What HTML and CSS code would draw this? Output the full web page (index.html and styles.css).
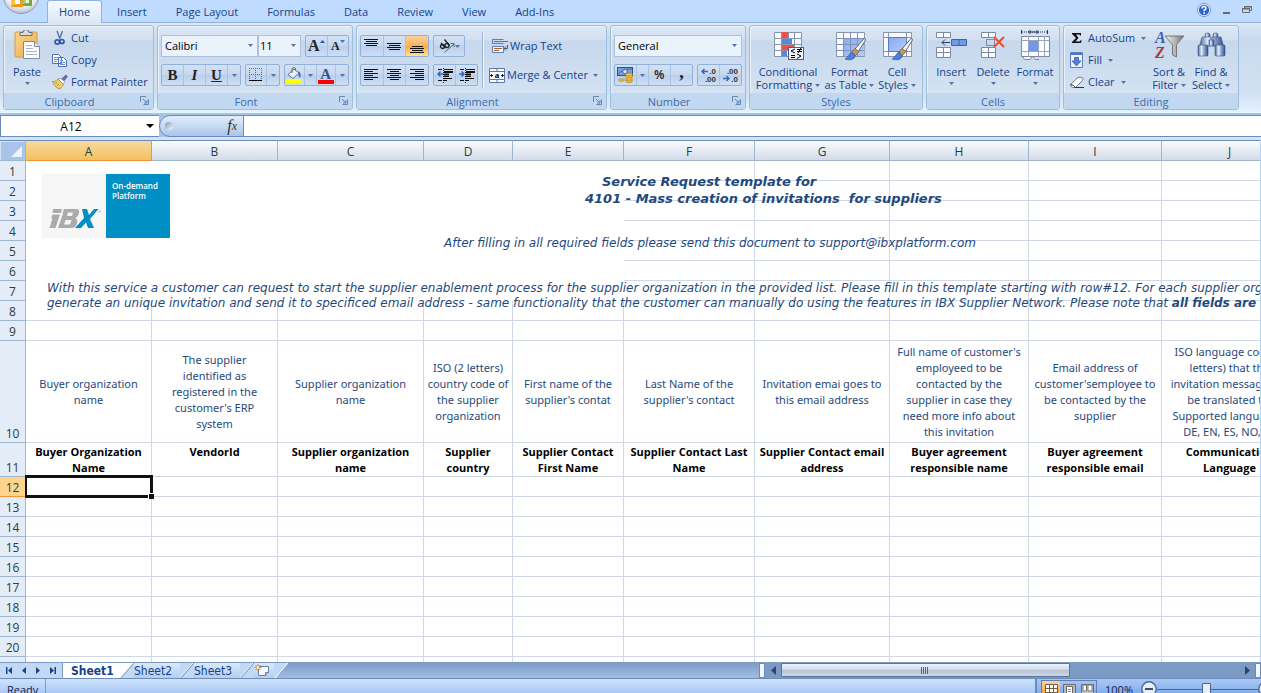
FILE: index.html
```html
<!DOCTYPE html>
<html lang="en">
<head>
<meta charset="utf-8">
<title>Service Request template</title>
<link rel="stylesheet" href="styles.css">
</head>
<body>
<svg class="defs" aria-hidden="true">
  <defs>
    <linearGradient id="gMetal" x1="0" y1="0" x2="1" y2="0"><stop offset="0" stop-color="#f4f4f4"/><stop offset=".5" stop-color="#b9b9b9"/><stop offset="1" stop-color="#6d6d6d"/></linearGradient>
    <linearGradient id="gBino" x1="0" y1="0" x2="1" y2="0"><stop offset="0" stop-color="#48659c"/><stop offset=".35" stop-color="#e4ecfa"/><stop offset=".6" stop-color="#8ea8d8"/><stop offset="1" stop-color="#35507f"/></linearGradient>
    <linearGradient id="gBoard" x1="0" y1="0" x2="1" y2="1"><stop offset="0" stop-color="#fbd58b"/><stop offset="1" stop-color="#e8ad50"/></linearGradient>
    <linearGradient id="gCell" x1="0" y1="0" x2="1" y2="1"><stop offset="0" stop-color="#86a9f0"/><stop offset="1" stop-color="#b5cdfb"/></linearGradient>
    <radialGradient id="gOrb" cx=".5" cy=".35" r=".65"><stop offset="0" stop-color="#fff"/><stop offset=".7" stop-color="#f0f2f5"/><stop offset="1" stop-color="#b9c1ce"/></radialGradient>
    <symbol id="down" viewBox="0 0 5 3"><path d="M0 0h5L2.500 3z" fill="#4f74ad"/></symbol>
    <symbol id="launch" viewBox="0 0 9 9"><path d="M.5 6V.5H6M3.500 8.500h5v-5M3 3l4 4M7 4v3H4" fill="none" stroke="#6685b0"/></symbol>
    <symbol id="brush" viewBox="0 0 22 24"><path d="M20.500 1 11 12l3 3 7.500-12z" fill="#f4f6f8" stroke="#5f6875"/><path d="M11 11.500 8 15l3 4 4-4.500z" fill="#c49a5c" stroke="#6b5136" stroke-width=".7"/><path d="M8 15c-3 1-3 5-7 7 5 2 10 0 10-3z" fill="#4f7fd8" stroke="#34599e" stroke-width=".7"/></symbol>
    <symbol id="tri" viewBox="0 0 4 7"><path d="M4 0v7L0 3.500z"/></symbol>
  </defs>
</svg>

<div class="app">
  <header class="titlebar">
    <button class="orb" aria-label="Office Button">
      <svg width="40" height="16" viewBox="0 0 40 16"><circle cx="21" cy="-4" r="17.500" fill="url(#gOrb)" stroke="#8a9bb8"/><g fill="none" stroke-width="3"><path d="M21.500 0v5.500H13V0" stroke="#f0962a"/><path d="M13.500 0v5" stroke="#f9c338"/><path d="M23 4.500h7.500V0" stroke="#6fb02c"/><path d="M24 4V0" stroke="#9ccf4e"/></g></svg>
    </button>
    <nav class="tabs" aria-label="Ribbon tabs">
      <button class="tab tab-on">Home</button>
      <button class="tab">Insert</button>
      <button class="tab">Page Layout</button>
      <button class="tab">Formulas</button>
      <button class="tab">Data</button>
      <button class="tab">Review</button>
      <button class="tab">View</button>
      <button class="tab">Add-Ins</button>
    </nav>
    <div class="wintools">
      <button aria-label="Help"><svg width="14" height="14" viewBox="0 0 14 14"><circle cx="7" cy="7" r="6.500" fill="#fff" stroke="#6c93cf"/><circle cx="7" cy="7" r="5.200" fill="#2b66cb"/><path d="M5 5.500Q5 3.500 7 3.500T9 5.300Q9 6.300 7.200 7.300V8.200" fill="none" stroke="#fff" stroke-width="1.500"/><rect x="6.400" y="9.300" width="1.600" height="1.600" fill="#fff"/></svg></button>
      <button aria-label="Minimize"><svg width="9" height="14" viewBox="0 0 9 14"><rect x="1" y="9" width="7" height="2" fill="#6b6b6b"/></svg></button>
      <button aria-label="Restore"><svg width="10" height="14" viewBox="0 0 10 14"><path d="M2.500 5V3.500h7v4H8M.5 5.500h7v4h-7z" fill="none" stroke="#6b6b6b"/><path d="M2 3h8v1.500H2zM0 5h8v1.500H0z" fill="#6b6b6b"/></svg></button>
    </div>
  </header>

  <div class="ribbon">
    <section class="group g-clip">
      <div class="body">
        <button class="big"><svg width="32" height="32" viewBox="0 0 32 32"><rect x="4" y="2" width="22" height="25" rx="1" fill="url(#gBoard)" stroke="#d39c45"/><path d="M9 2.500h3q0-3 3-3t3 3h3v3H9z" fill="#d9dbe0" stroke="#6b6e76"/><path d="M12.500 11.500h11l5 5v12h-16z" fill="#fdfdff" stroke="#7c8aa3"/><path d="M23.500 11.500v5h5" fill="#dfe6f3" stroke="#7c8aa3"/><path d="M15 15.500h6M15 18.500h7M15 21.500h11M15 24.500h11" stroke="#a5b2cc"/></svg><span>Paste</span><svg class="dn" width="5" height="3"><use href="#down"/></svg></button>
        <div class="stack">
          <button class="small"><svg width="16" height="16" viewBox="0 0 16 16"><path d="M5 1l3 8M10.500 1l-3 8" stroke="#5e79a8" stroke-width="1.500" fill="none"/><circle cx="5.300" cy="12" r="2.200" fill="none" stroke="#2e5aa8" stroke-width="1.700"/><circle cx="10" cy="11.500" r="2" fill="none" stroke="#2e5aa8" stroke-width="1.700"/></svg>Cut</button>
          <button class="small"><svg width="16" height="16" viewBox="0 0 16 16"><path d="M.5 2.500h6l3 3v6h-9zM6.500 5.500h5l3 3v6h-8z" fill="#fbfcff" stroke="#4870b8"/><path d="M2 5.500h4M2 7.500h4M2 9.500h3M8 8.500h3M8 10.500h5M8 12.500h5" stroke="#6c90d0"/></svg>Copy</button>
          <button class="small"><svg width="16" height="16" viewBox="0 0 16 16"><path d="M14 1l1.500 1.500-4 5L9 5.500z" fill="#6d6aa8" stroke="#4d4a84" stroke-width=".6"/><path d="M9 4.500 6 5l5.500 5.500 1-3z" fill="#fff" stroke="#777" stroke-width=".6"/><path d="M6 5C4 8 2 7 .5 7.500c1 4 4 6.500 7.500 7.500 1-1.500 2-3 3.500-4.500z" fill="#f1cf6a" stroke="#a17d2b" stroke-width=".7"/><path d="M3 9.500l2-1M5 12l2-2" stroke="#b88f38"/></svg>Format Painter</button>
        </div>
      </div>
      <footer><span>Clipboard</span><button class="launch" aria-label="Clipboard options"><svg width="9" height="9"><use href="#launch"/></svg></button></footer>
    </section>

    <section class="group g-font">
      <div class="body rows">
        <div class="row">
          <div class="joined">
            <label class="combo c-font"><select aria-label="Font"><option>Calibri</option></select><svg width="5" height="3"><use href="#down"/></svg></label>
            <label class="combo c-size"><select aria-label="Font size"><option>11</option></select><svg width="5" height="3"><use href="#down"/></svg></label>
          </div>
          <div class="set"><button class="serif grow" aria-label="Grow font">A<svg width="5" height="3" viewBox="0 0 5 3"><path d="M2.500 0 5 3H0z" fill="#2f5597"/></svg></button><button class="serif shrink" aria-label="Shrink font">A<svg width="5" height="3"><use href="#down"/></svg></button></div>
        </div>
        <div class="row">
          <div class="set s-biu"><button class="serif">B</button><button class="serif it">I</button><button class="serif un">U</button><button class="arr" aria-label="Underline options"><svg width="5" height="3"><use href="#down"/></svg></button></div>
          <div class="set s-bord"><button aria-label="Borders"><svg width="14" height="14" viewBox="0 0 14 14"><path d="M.5 0v12M6.500 0v12M12.500 0v12M0 .5h13M0 6.500h13" stroke="#666" stroke-dasharray="1 1" fill="none"/><path d="M0 12.500h13" stroke="#000"/></svg></button><button class="arr" aria-label="Border options"><svg width="5" height="3"><use href="#down"/></svg></button></div>
          <div class="set s-fill"><button aria-label="Fill color"><svg width="16" height="16" viewBox="0 0 16 16"><path d="M2 7.500 8 2l5 4-6 5.500z" fill="#e9eef8" stroke="#5f6f8c"/><path d="M6 6V2.500Q6 .5 8 .5t1.500 3" fill="none" stroke="#666"/><path d="M12 4q4 2 2 7-2-2-1.500-5z" fill="#3765b7"/><rect y="12" width="16" height="4" fill="#ff0"/></svg></button><button class="arr" aria-label="Fill options"><svg width="5" height="3"><use href="#down"/></svg></button><button class="serif fcolor" aria-label="Font color"><span>A</span></button><button class="arr" aria-label="Font color options"><svg width="5" height="3"><use href="#down"/></svg></button></div>
        </div>
      </div>
      <footer><span>Font</span><button class="launch" aria-label="Font options"><svg width="9" height="9"><use href="#launch"/></svg></button></footer>
    </section>

    <section class="group g-align">
      <div class="body split">
        <div class="rows">
          <div class="row">
            <div class="set s-three"><button aria-label="Top align"><svg width="15" height="16" viewBox="0 0 15 16"><path d="M0 1.500h14M2 3.500h11M0 5.500h14M2 7.500h11" stroke="#111"/></svg></button><button aria-label="Middle align"><svg width="15" height="16" viewBox="0 0 15 16"><path d="M0 5.500h14M2 7.500h11M0 9.500h14M2 11.500h11" stroke="#111"/></svg></button><button class="lit" aria-label="Bottom align"><svg width="15" height="16" viewBox="0 0 15 16"><path d="M2 8.500h11M0 10.500h14M2 12.500h11M0 14.500h14" stroke="#111"/></svg></button></div>
            <div class="set s-orient"><button aria-label="Orientation"><svg width="16" height="16" viewBox="0 0 16 16"><g fill="none" stroke="#222" stroke-width="1.300"><circle cx="3.500" cy="8.500" r="2"/><path d="M2 5l4.500 5M5.500 1.500l5 6"/><circle cx="8" cy="7.500" r="2"/></g><path d="M5.500 14.500 15 6M11.500 5.500h3.500V9" fill="none" stroke="#666"/></svg><svg width="5" height="3"><use href="#down"/></svg></button></div>
          </div>
          <div class="row">
            <div class="set s-three"><button aria-label="Align left"><svg width="15" height="12" viewBox="0 0 15 12"><path d="M0 .5h14M0 2.500h9M0 4.500h14M0 6.500h9M0 8.500h14M0 10.500h9" stroke="#111"/></svg></button><button aria-label="Center"><svg width="15" height="12" viewBox="0 0 15 12"><path d="M0 .5h14M3 2.500h9M0 4.500h14M3 6.500h9M0 8.500h14M3 10.500h9" stroke="#111"/></svg></button><button aria-label="Align right"><svg width="15" height="12" viewBox="0 0 15 12"><path d="M0 .5h14M5 2.500h9M0 4.500h14M5 6.500h9M0 8.500h14M5 10.500h9" stroke="#111"/></svg></button></div>
            <div class="set s-two"><button aria-label="Decrease indent"><svg width="16" height="15" viewBox="0 0 16 15"><path d="M1 1.500h4M7 1.500h9M7 12.500h3M1 12.500h4M7 10.500h8M7 8.500h5" stroke="#111"/><path d="M7 4h9M7 6.500h5" stroke="#111" stroke-width="2"/><path d="M6.500 0v15" stroke="#111" stroke-dasharray="1 1"/><path d="M6 6H1M3.500 3.500 1 6l2.500 2.500" stroke="#3566c0" stroke-width="1.500" fill="none"/></svg></button><button aria-label="Increase indent"><svg width="16" height="15" viewBox="0 0 16 15"><path d="M1 1.500h4M7 1.500h9M7 12.500h3M1 12.500h4M7 10.500h8M7 8.500h5" stroke="#111"/><path d="M7 4h9M7 6.500h5" stroke="#111" stroke-width="2"/><path d="M6.500 0v15" stroke="#111" stroke-dasharray="1 1"/><path d="M0 6h5M2.500 3.500 5 6 2.500 8.500" stroke="#3566c0" stroke-width="1.500" fill="none"/></svg></button></div>
          </div>
        </div>
        <div class="vline"></div>
        <div class="rows">
          <button class="flat"><svg width="16" height="16" viewBox="0 0 16 16"><path d="M.5 1.500h11M.5 5.500h11M.5 8.500h11v6H.5zM.5 1v5M11.500 8v6" stroke="#5f7fb5" fill="#f3f7fd"/><path d="M2 3.500h14M2 10.500h8M2 12.500h5" stroke="#a8602c"/><path d="M15.500 7v3.500H12M14 8.500l-2 2 2 2" fill="none" stroke="#3e5f99"/></svg>Wrap Text</button>
          <button class="flat"><svg width="16" height="15" viewBox="0 0 16 15"><path d="M.5.5h15v14H.5zM.5 3.500h15M.5 11.500h15M8 .5v3M8 11.500v3" fill="#fafcff" stroke="#5a78aa"/><path d="M1 7.500h3M15 7.500h-3M2.500 6v3M13.500 6v3" stroke="#222"/><text x="8" y="10" font-size="9" font-weight="bold" text-anchor="middle" font-family="Liberation Serif, serif">a</text></svg>Merge &amp; Center<svg width="5" height="3"><use href="#down"/></svg></button>
        </div>
      </div>
      <footer><span>Alignment</span><button class="launch" aria-label="Alignment options"><svg width="9" height="9"><use href="#launch"/></svg></button></footer>
    </section>

    <section class="group g-num">
      <div class="body rows">
        <label class="combo c-num"><select aria-label="Number format"><option>General</option></select><svg width="5" height="3"><use href="#down"/></svg></label>
        <div class="row">
          <div class="set s-cur"><button aria-label="Accounting format"><svg width="16" height="16" viewBox="0 0 16 16"><rect x=".5" y=".5" width="15" height="8" fill="#7fa0de" stroke="#2c4c8f"/><path d="M1 7q5-5 14-5" stroke="#3f63b0" fill="none"/><circle cx="8" cy="4.500" r="2.300" fill="#d5e2fa" stroke="#3f63b0"/><g fill="#f5ca4a" stroke="#a8741c" stroke-width=".7"><ellipse cx="12" cy="14" rx="3.500" ry="1.500"/><ellipse cx="12" cy="11.800" rx="3.500" ry="1.500"/><ellipse cx="12" cy="9.500" rx="3.500" ry="1.500"/><ellipse cx="12" cy="7.500" rx="3.500" ry="1.500"/><ellipse cx="4.500" cy="13" rx="3" ry="1.200"/></g></svg></button><button class="arr" aria-label="Accounting options"><svg width="5" height="3"><use href="#down"/></svg></button><button class="pct">%</button><button class="comma">,</button></div>
          <div class="set s-two"><button aria-label="Increase decimal"><svg width="18" height="18" viewBox="0 0 18 18"><path d="M8 5.500H2M4.500 3 2 5.500 4.500 8" stroke="#3566c0" stroke-width="1.400" fill="none"/><g font-family="Liberation Sans, sans-serif" font-size="8" font-weight="bold" fill="#333" text-anchor="end"><text x="16" y="8">.0</text><text x="16" y="16">.00</text></g></svg></button><button aria-label="Decrease decimal"><svg width="18" height="18" viewBox="0 0 18 18"><path d="M1 12.500h6M4.500 10 7 12.500 4.500 15" stroke="#3566c0" stroke-width="1.400" fill="none"/><g font-family="Liberation Sans, sans-serif" font-size="8" font-weight="bold" fill="#333" text-anchor="end"><text x="16" y="8">.00</text><text x="16" y="16">.0</text></g></svg></button></div>
        </div>
      </div>
      <footer><span>Number</span><button class="launch" aria-label="Number options"><svg width="9" height="9"><use href="#launch"/></svg></button></footer>
    </section>

    <section class="group g-styles">
      <div class="body bigs">
        <button class="big w-cond"><svg width="32" height="32" viewBox="0 0 32 32"><path d="M2.500 2.500h27v24h-27z" fill="#f8faff" stroke="#8795af"/><rect x="9" y="2" width="7" height="6" fill="#f0503c"/><rect x="9" y="8" width="11" height="6" fill="#5b86e0"/><rect x="9" y="14" width="14" height="6" fill="#f0503c"/><rect x="9" y="20" width="6" height="6" fill="#5b86e0"/><path d="M2.500 8.500h27M2.500 14.500h27M2.500 20.500h27M9.500 2.500v24M16.500 2.500v6M22.500 2.500v24" stroke="#8795af" fill="none"/><rect x="16.500" y="17.500" width="15" height="12" fill="#f3f5fa" stroke="#50607c"/><path d="M23 19l-4 2 4 2M19 25.500h4M19 27.500h4M25 19.500h5M25 21.500h5M29 18l-3 5M25 24l4 2-4 2.500" stroke="#000" fill="none"/></svg><span>Conditional<br>Formatting <svg width="5" height="3"><use href="#down"/></svg></span></button>
        <button class="big w-fmt"><svg width="32" height="32" viewBox="0 0 32 32"><path d="M2.500 2.500h28v24h-28z" fill="#f8faff" stroke="#8795af"/><path d="M9 8h21.500v18H9z" fill="url(#gCell)"/><path d="M2.500 8.500h28M2.500 14.500h28M2.500 20.500h28M9.500 2.500v24M16.500 2.500v24M23.500 2.500v24" stroke="#7f92b6" fill="none"/><use href="#brush" x="10" y="7" width="22" height="24"/></svg><span>Format<br>as Table <svg width="5" height="3"><use href="#down"/></svg></span></button>
        <button class="big w-42"><svg width="32" height="32" viewBox="0 0 32 32"><path d="M2.500 2.500h28v24h-28z" fill="#f8faff" stroke="#8795af"/><path d="M2.500 7.500h28M2.500 21.500h28M7.500 2.500v24M25.500 2.500v24" stroke="#8795af" fill="none"/><path d="M7.500 7.500h18v14h-18z" fill="url(#gCell)" stroke="#5a7bc0"/><use href="#brush" x="10" y="7" width="22" height="24"/></svg><span>Cell<br>Styles <svg width="5" height="3"><use href="#down"/></svg></span></button>
      </div>
      <footer><span>Styles</span></footer>
    </section>

    <section class="group g-cells">
      <div class="body bigs">
        <button class="big w-42"><svg width="32" height="32" viewBox="0 0 32 32"><path d="M1.500 2.500h14v5h-14zM8.500 2.500v5M1.500 17.500h14v10h-14zM8.500 17.500v10M1.500 22.500h14" fill="#fafcff" stroke="#7c89a0"/><path d="M16.500 9.500h15v6h-15zM24 9.500v6" fill="#6f9aec" stroke="#44649f"/><path d="M15 12.500H7M10 9.500l-3 3 3 3" stroke="#2c3c5c" fill="none"/></svg><span>Insert</span><svg class="dn" width="5" height="3"><use href="#down"/></svg></button>
        <button class="big w-42"><svg width="32" height="32" viewBox="0 0 32 32"><path d="M4.500 2.500h14v5h-14zM11.500 2.500v5M4.500 17.500h14v10h-14zM11.500 17.500v10M4.500 22.500h14" fill="#fafcff" stroke="#7c89a0"/><path d="M9.500 9.500h8v6h-8z" fill="none" stroke="#2c3c5c" stroke-dasharray="1 1"/><path d="M17 7l10 10M27 7 17 17" stroke="#f04a32" stroke-width="2"/></svg><span>Delete</span><svg class="dn" width="5" height="3"><use href="#down"/></svg></button>
        <button class="big w-42"><svg width="32" height="32" viewBox="0 0 32 32"><path d="M2.500 0v4M28.500 0v4" stroke="#2c3c5c"/><path d="M3 2h25" stroke="#2c3c5c" stroke-dasharray="1 1"/><path d="M9 2h11M11.500 0l-2 2 2 2M17.500 0l2 2-2 2" stroke="#2c3c5c" fill="none"/><path d="M4 26.500q0 3 3 3h4l2-3M14 26.500q1 3 3 3h3" fill="#fafcff" stroke="#7c89a0"/><path d="M2.500 6.500h28v20h-28z" fill="#fafcff" stroke="#7c89a0"/><path d="M2.500 10.500h28M2.500 21.500h28M9.500 6.500v20M19.500 6.500v20M25.500 6.500v20" stroke="#98a5ba" fill="none"/><rect x="10" y="11" width="9" height="10" fill="#6f9aec"/></svg><span>Format</span><svg class="dn" width="5" height="3"><use href="#down"/></svg></button>
      </div>
      <footer><span>Cells</span></footer>
    </section>

    <section class="group g-edit">
      <div class="body">
        <div class="stack">
          <button class="small"><svg width="14" height="16" viewBox="0 0 14 16"><path d="M2 3h9v2.500h-1l-.5-1H6L8.500 8 5.500 11.500H10l.7-1.500h.8L11 13H2v-1l4-4-4-4z" fill="#111"/></svg>AutoSum<svg width="5" height="3"><use href="#down"/></svg></button>
          <button class="small"><svg width="14" height="16" viewBox="0 0 14 16"><path d="M.5.5h12v15H.5z" fill="#eef3fc" stroke="#5b7fc2"/><path d="M1 1h11v2H1z" fill="#4e78c4"/><path d="M4.500 5.500h4V9H11l-4.500 5L2 9h2.500z" fill="#4f82e0" stroke="#2b55a5" stroke-width=".7"/></svg>Fill<svg width="5" height="3"><use href="#down"/></svg></button>
          <button class="small"><svg width="14" height="16" viewBox="0 0 14 16"><path d="M.5 10.500 8 3.500q2-1 4.500.5 1 1 0 2.500l-7 7H2.500q-2-1-2-3z" fill="#fff" stroke="#68748a"/><path d="M.5 10.500q3 0 5 3M5 13.500h9" fill="none" stroke="#333"/></svg>Clear<svg width="5" height="3"><use href="#down"/></svg></button>
        </div>
        <div class="bigs">
          <button class="big w-42"><svg width="32" height="32" viewBox="0 0 32 32"><path d="M12 6h19l-7.500 8.500V27l-4-2V14.500z" fill="url(#gMetal)" stroke="#777"/><g font-family="Liberation Serif, serif" font-weight="bold" font-size="16" font-style="italic"><text x="2" y="13" fill="#3a62b0">A</text><text x="2" y="28" fill="#a33b3b">Z</text></g></svg><span>Sort &amp;<br>Filter <svg width="5" height="3"><use href="#down"/></svg></span></button>
          <button class="big w-42"><svg width="32" height="32" viewBox="0 0 32 32"><g fill="url(#gBino)" stroke="#40557f" stroke-width=".6"><rect x="10" y="3" width="5" height="5" rx="2"/><rect x="18" y="3" width="5" height="5" rx="2"/><path d="M7 7h9v9H4.500zM17 7h9l2.500 9H17z"/><rect x="14" y="10" width="5" height="6"/><rect x="3" y="15" width="10" height="11" rx="1"/><rect x="20" y="15" width="10" height="11" rx="1"/></g></svg><span>Find &amp;<br>Select <svg width="5" height="3"><use href="#down"/></svg></span></button>
        </div>
      </div>
      <footer><span>Editing</span></footer>
    </section>
  </div>

  <div class="fbar">
    <input class="namebox" aria-label="Name box" value="A12">
    <button class="namearr" aria-label="Name list"><svg width="8" height="4" viewBox="0 0 8 4"><path d="M0 0h8L4 4z"/></svg></button>
    <div class="fxbox"><span class="knob"></span><button class="fx">f<sub>x</sub></button></div>
    <input class="formula" aria-label="Formula">
  </div>

  <main class="sheet">
    <table class="grid">
      <colgroup><col class="k"><col class="a"><col class="a"><col class="c"><col class="d"><col class="e"><col class="f"><col class="g"><col class="h"><col class="i"><col class="j"></colgroup>
      <thead><tr><th class="corner"><svg width="11" height="11" viewBox="0 0 11 11"><path d="M11 0v11H0z" fill="#eef3fb"/></svg></th><th class="sel">A</th><th>B</th><th>C</th><th>D</th><th>E</th><th>F</th><th>G</th><th>H</th><th>I</th><th>J</th></tr></thead>
      <tbody>
        <tr><th>1</th><td class="blank" colspan="5" rowspan="7"></td><td></td><td></td><td></td><td></td><td></td></tr>
        <tr><th>2</th><td></td><td></td><td></td><td></td><td></td></tr>
        <tr><th>3</th><td></td><td></td><td></td><td></td><td></td></tr>
        <tr><th>4</th><td></td><td></td><td></td><td></td><td></td></tr>
        <tr><th>5</th><td></td><td></td><td></td><td></td><td></td></tr>
        <tr><th>6</th><td></td><td></td><td></td><td></td><td></td></tr>
        <tr><th>7</th><td></td><td></td><td></td><td></td><td></td></tr>
        <tr><th>8</th><td></td><td></td><td></td><td></td><td></td><td></td><td></td><td></td><td></td><td></td></tr>
        <tr><th>9</th><td></td><td></td><td></td><td></td><td></td><td></td><td></td><td></td><td></td><td></td></tr>
        <tr class="desc"><th>10</th><td>Buyer organization<br>name</td><td>The supplier<br>identified as<br>registered in the<br>customer's ERP<br>system</td><td>Supplier organization<br>name</td><td>ISO (2 letters)<br>country code of<br>the supplier<br>organization</td><td>First name of the<br>supplier's contat</td><td>Last Name of the<br>supplier's contact</td><td>Invitation emai goes to<br>this email address</td><td>Full name of customer's<br>employeed to be<br>contacted by the<br>supplier in case they<br>need more info about<br>this invitation</td><td>Email address of<br>customer'semployee to<br>be contacted by the<br>supplier</td><td>ISO language code (2<br>letters) that the<br>invitation message will<br>be translated to.<br>Supported languages:<br>DE, EN, ES, NO, SE</td></tr>
        <tr class="names"><th>11</th><td>Buyer Organization<br>Name</td><td>VendorId</td><td>Supplier organization<br>name</td><td>Supplier<br>country</td><td>Supplier Contact<br>First Name</td><td>Supplier Contact Last<br>Name</td><td>Supplier Contact email<br>address</td><td>Buyer agreement<br>responsible name</td><td>Buyer agreement<br>responsible email</td><td>Communication<br>Language</td></tr>
        <tr><th class="sel">12</th><td class="cursor"><i></i></td><td></td><td></td><td></td><td></td><td></td><td></td><td></td><td></td><td></td></tr>
        <tr><th>13</th><td></td><td></td><td></td><td></td><td></td><td></td><td></td><td></td><td></td><td></td></tr>
        <tr><th>14</th><td></td><td></td><td></td><td></td><td></td><td></td><td></td><td></td><td></td><td></td></tr>
        <tr><th>15</th><td></td><td></td><td></td><td></td><td></td><td></td><td></td><td></td><td></td><td></td></tr>
        <tr><th>16</th><td></td><td></td><td></td><td></td><td></td><td></td><td></td><td></td><td></td><td></td></tr>
        <tr><th>17</th><td></td><td></td><td></td><td></td><td></td><td></td><td></td><td></td><td></td><td></td></tr>
        <tr><th>18</th><td></td><td></td><td></td><td></td><td></td><td></td><td></td><td></td><td></td><td></td></tr>
        <tr><th>19</th><td></td><td></td><td></td><td></td><td></td><td></td><td></td><td></td><td></td><td></td></tr>
        <tr><th>20</th><td></td><td></td><td></td><td></td><td></td><td></td><td></td><td></td><td></td><td></td></tr>
        <tr><th></th><td></td><td></td><td></td><td></td><td></td><td></td><td></td><td></td><td></td><td></td></tr>
      </tbody>
    </table>
    <div class="logo">
      <svg class="ibx" width="64" height="64" viewBox="0 0 64 64" role="img" aria-label="iBX"><g fill="#a9abad"><path d="M11 35h9l-1 4h-7.500l-1 0zM10.500 40.500H18l-4.500 13.500H7.500l3-9.500H9z"/><path fill-rule="evenodd" d="M22 35h12q4 0 3 4-1 4-4 5 3 1 2 5-1 5-6 5H16l5-14.500h-.5zM26 38.500l-1 3.500h5l1-3.500zM23.500 46l-1.500 4.500h6l1.500-4.500z"/></g><path d="M40 35h5l2 6 5-6h4.500L48 45l4 9h-6l-2-5.500-5 5.500h-6l9-10z" fill="#008fc5"/><circle cx="57.500" cy="37.500" r="1.200" fill="none" stroke="#b5b5b5" stroke-width=".6"/></svg>
      <div class="demand">On-demand<br>Platform</div>
    </div>
    <div class="note heading"><p class="first">Service Request template for</p><p>4101 - Mass creation of invitations&nbsp; for suppliers</p></div>
    <p class="note send">After filling in all required fields please send this document to support@ibxplatform.com</p>
    <div class="note intro"><p>With this service a customer can request to start the supplier enablement process for the supplier organization in the provided list. Please fill in this template starting with row#12. For each supplier organization we</p><p>generate an unique invitation and send it to specificed email address - same functionality that the customer can manually do using the features in IBX Supplier Network. Please note that <b>all fields are mandatory</b></p></div>
  </main>

  <div class="sheetbar">
    <div class="nav">
      <button aria-label="First sheet"><svg width="7" height="7" viewBox="0 0 7 7"><path d="M0 0h1.500v7H0zM6 0v7L2 3.500z"/></svg></button>
      <button aria-label="Previous sheet"><svg width="4" height="7"><use href="#tri"/></svg></button>
      <button aria-label="Next sheet"><svg width="4" height="7" viewBox="0 0 4 7"><path d="M0 0v7l4-3.500z"/></svg></button>
      <button aria-label="Last sheet"><svg width="7" height="7" viewBox="0 0 7 7"><path d="M5.500 0H7v7H5.500zM1 0v7l4-3.500z"/></svg></button>
    </div>
    <button class="stab stab-on">Sheet1</button>
    <svg class="slant" width="14" height="16" viewBox="0 0 14 16"><path d="M0 0h14L0 16z" fill="#fff"/><path d="M14 0v16H0z" fill="#c3d8f5"/><path d="M0 16 13.500.5H14" stroke="#6f8fbe" fill="none"/></svg>
    <button class="stab">Sheet2</button>
    <svg class="slant" width="14" height="16" viewBox="0 0 14 16"><path d="M0 0h14v16H0z" fill="#c3d8f5"/><path d="M0 15 13 0" stroke="#fff"/><path d="M0 16 14 0" stroke="#6f8fbe"/></svg>
    <button class="stab">Sheet3</button>
    <svg class="slant" width="14" height="16" viewBox="0 0 14 16"><path d="M0 0h14v16H0z" fill="#c3d8f5"/><path d="M0 15 13 0" stroke="#fff"/><path d="M0 16 14 0" stroke="#6f8fbe"/></svg>
    <button class="stab stab-new" aria-label="Insert worksheet"><svg width="16" height="13" viewBox="0 0 16 13"><path d="M4.500 2.500h10v6l-3 3h-7z" fill="#f6f9ff" stroke="#6a7fa5"/><path d="M14.500 8.500h-3v3" fill="#b9c6de" stroke="#6a7fa5"/><path d="M4 0v7M.5 3.500h7M1.500 1l5 5M6.500 1l-5 5" stroke="#d98a1e"/><circle cx="4" cy="3.500" r="1.300" fill="#fff3c4"/></svg></button>
    <svg class="slant" width="14" height="16" viewBox="0 0 14 16"><path d="M0 0h14L0 16z" fill="#c3d8f5"/><path d="M0 16 14 0" stroke="#fff"/></svg>
    <div class="fillbar"></div>
    <div class="hscroll">
      <span class="grip"></span>
      <button aria-label="Scroll left"><svg width="5" height="9" viewBox="0 0 5 9"><path d="M5 0v9L0 4.500z"/></svg></button>
      <div class="track"><div class="thumb"><i></i></div></div>
      <button aria-label="Scroll right"><svg width="5" height="9" viewBox="0 0 5 9"><path d="M0 0v9l5-4.500z"/></svg></button>
      <span class="grip"></span>
    </div>
  </div>

  <footer class="status">
    <span class="ready">Ready</span>
    <div class="tools">
      <div class="views">
        <button class="lit" aria-label="Normal view"><svg width="13" height="13" viewBox="0 0 13 13"><path d="M.5.5h12v12H.5zM4.500.5v12M8.500.5v12M.5 4.500h12M.5 8.500h12" fill="#fff" stroke="#6c6048"/></svg></button>
        <button aria-label="Page layout view"><svg width="13" height="13" viewBox="0 0 13 13"><path d="M.5.5h12v12H.5z" fill="#b9b9b9" stroke="#6b6b6b"/><path d="M3.500 2.500h6v9h-6z" fill="#fff" stroke="#6b6b6b"/><path d="M5 5.500h3M5 7.500h3M5 9.500h3" stroke="#888"/></svg></button>
        <button aria-label="Page break preview"><svg width="13" height="13" viewBox="0 0 13 13"><path d="M.5.500h12v12H.5z" fill="#c9c9c9" stroke="#6b6b6b"/><path d="M2 1h3.500v6H2zM7 1h4v6H7z" fill="#fff" stroke="#777"/></svg></button>
      </div>
      <button class="pctbtn">100%</button>
      <button aria-label="Zoom out"><svg width="16" height="16" viewBox="0 0 16 16"><circle cx="8" cy="8" r="7.200" fill="#e6effb" stroke="#4d668f" stroke-width="1.400"/><rect x="4" y="7" width="8" height="2" fill="#3c4f70"/></svg></button>
      <input class="zoom" type="range" min="0" max="100" value="49" aria-label="Zoom">
      <button aria-label="Zoom in"><svg width="16" height="16" viewBox="0 0 16 16"><circle cx="8" cy="8" r="7.200" fill="#e6effb" stroke="#4d668f" stroke-width="1.400"/><path d="M4 8h8M8 4v8" stroke="#3c4f70" stroke-width="2"/></svg></button>
    </div>
  </footer>
</div>
</body>
</html>
```
FILE: styles.css
```css
* { box-sizing: border-box; }
body {
  margin: 0;
  height: 100vh;
  overflow: hidden;
  font: 11px/16px "Open Sans", "Noto Sans", sans-serif;
  color: #15428b;
}
button, input, select { font: inherit; color: inherit; margin: 0; padding: 0; border: 0; background: none; }
button { display: flex; align-items: center; justify-content: center; white-space: nowrap; }
p { margin: 0; }
.defs { position: absolute; width: 0; height: 0; }
svg { flex: none; }
.app { display: flex; flex-direction: column; height: 100vh; overflow: hidden; background: #bfdbff; }

/* title row */
.titlebar { display: flex; align-items: flex-start; height: 23px; border-bottom: 1px solid #8db2e3; flex: none; }
.orb { width: 47px; height: 16px; flex: none; justify-content: flex-start; }
.tabs { display: flex; gap: 1px; }
.tab { height: 23px; padding: 0 14px; }
.tab-on {
  padding: 0 11px;
  border: 1px solid #8db2e3;
  border-bottom: 0;
  border-radius: 3px 3px 0 0;
  background: linear-gradient(#f5faff, #dce8f6);
}
.wintools { display: flex; gap: 11px; margin-left: auto; padding: 3px 9px 0 0; }

/* ribbon */
.ribbon {
  display: flex;
  flex: none;
  gap: 3px;
  height: 90px;
  padding: 2px 3px;
  background: linear-gradient(#dce7f4 0, #c9d9ee 16px, #d2e1f2 70px, #e3f2fd);
  border-bottom: 1px solid #e4f7fd;
}
.group {
  display: flex;
  flex-direction: column;
  flex: none;
  border: 1px solid #9dbfdb;
  border-radius: 3px;
  background: linear-gradient(#dee8f5 0, #d1dff0 14px, #c7d8ed 15px, #d8e5f3);
  box-shadow: inset 1px 1px 0 #e9f1fa;
  overflow: hidden;
}
.g-clip { width: 151px; }
.g-font { width: 196px; }
.g-align { width: 251px; }
.g-num { width: 136px; }
.g-styles { width: 174px; }
.g-cells { width: 134px; }
.g-edit { width: 176px; }
.group footer { position: relative; height: 16px; line-height: 18px; background: #c1d8f0; color: #3e6aaa; text-align: center; }
.group footer span { padding-right: 18px; }
.g-styles footer span, .g-cells footer span, .g-edit footer span { padding: 0; }
.launch { position: absolute; right: 4px; top: 3px; }
.body { display: flex; flex: 1; padding: 0 3px; }
.g-clip .body { padding: 0; gap: 2px; }
.body.rows { flex-direction: column; }
.rows { display: flex; flex-direction: column; gap: 7px; padding-top: 9px; }
.row { display: flex; gap: 4px; }
.split { gap: 4px; }
.vline { width: 2px; height: 56px; margin-top: 6px; border-left: 1px solid #9ab7dc; border-right: 1px solid #eef5fc; }
.stack { display: flex; flex-direction: column; padding-top: 1px; }
.small { height: 22px; gap: 3px; justify-content: flex-start; }
.small svg:last-child { margin-left: 2px; }
.small svg:first-child { margin: 0; }
.g-edit .small { gap: 4px; }
.big { flex-direction: column; justify-content: flex-start; width: 42px; padding-top: 4px; gap: 3px; line-height: 13px; }
.g-clip .big { width: 46px; }
.big span { display: block; }
.big span svg { vertical-align: 2px; }
.big .dn { margin-top: 1px; }
.bigs { display: flex; }
.w-cond { width: 70px; }
.w-fmt { width: 53px; }
.g-edit .bigs { margin-left: auto; }
.g-edit .body { padding: 0 6px; }
.set {
  display: flex;
  height: 22px;
  border: 1px solid #92b1da;
  border-radius: 2px;
  background: linear-gradient(#d3e1f4 0, #c5d7ef 50%, #b9cfec 51%, #cfdff3);
}
.set button { flex: 1; border-right: 1px solid #a9c3e6; }
.set button:last-child { border-right: 0; }
.set .arr { flex: 0 0 12px; }
.s-biu { width: 80px; }
.s-bord { width: 35px; }
.s-fill { width: 67px; }
.s-three { width: 69px; }
.s-orient { width: 32px; }
.s-two { width: 45px; }
.s-cur { width: 80px; }
.s-cur button { flex: 1 0 20px; }
.lit { background: linear-gradient(#fbd0a0, #fdb457 48%, #fda63c 50%, #ffe58a); }
.g-font .row .set:last-child { flex: 1; }
.serif { font: bold 15px/20px "Liberation Serif", serif; color: #222; }
.it { font-style: italic; }
.un { text-decoration: underline; }
.grow { font-size: 16px; }
.shrink { font-size: 12px; }
.grow svg, .shrink svg { align-self: flex-start; margin-top: 4px; }
.fcolor span { width: 16px; height: 17px; line-height: 14px; border-bottom: 4px solid #f00; color: #2f5597; }
.pct { font-size: 12px; color: #222; font-weight: 600; }
.comma { font: bold 18px/8px "Liberation Serif", serif; color: #222; padding-bottom: 6px; }
.joined { display: flex; }
.combo { position: relative; display: block; height: 22px; border: 1px solid #abc1de; background: #eaf2fb; color: #000; }
.combo select { width: 100%; height: 20px; padding-left: 3px; appearance: none; }
.combo svg { position: absolute; right: 4px; top: 8px; }
.c-font { width: 97px; }
.c-size { width: 43px; }
.c-size select { padding-left: 1px; }
.c-num { width: 128px; }
.flat { height: 22px; gap: 2px; justify-content: flex-start; }
.split .rows:last-child { padding-left: 1px; }
.flat svg:last-child { margin-left: 3px; }

/* formula bar */
.fbar { display: flex; flex: none; height: 27px; padding-top: 2px; background: #a6c3e8; border-bottom: 3px solid #d3e3f6; }
.fbar > * { height: 22px; border-top: 1px solid #6b8cb8; border-bottom: 1px solid #6b8cb8; background: #fff; }
.namebox { width: 141px; text-align: center; color: #000; font-size: 12px; border-left: 1px solid #6b8cb8; }
.namearr { width: 18px; }
.fbar .fxbox {
  display: flex;
  align-items: center;
  justify-content: space-between;
  width: 85px;
  padding: 0 6px 0 5px;
  border-left: 1px solid #6b8cb8;
  border-right: 1px solid #6b8cb8;
  border-radius: 11px 0 0 11px;
  background: linear-gradient(#e3eefc, #a9c5ea);
}
.knob { width: 8px; height: 8px; border-radius: 50%; background: linear-gradient(135deg, #8796ad, #f6f9fd); }
.fx { font: italic 16px/16px "Liberation Serif", serif; color: #333; }
.fx sub { font-size: 12px; line-height: 8px; }
.formula { flex: 1; min-width: 0; }

/* grid */
.sheet { position: relative; flex: 1; min-height: 0; overflow: hidden; background: #fff; border-right: 1px solid #b8d2f3; }
.grid { width: 1298px; table-layout: fixed; border-collapse: separate; border-spacing: 0; }
.k { width: 26px; }
.a { width: 126px; }
.c { width: 146px; }
.d { width: 89px; }
.e { width: 111px; }
.f { width: 131px; }
.g { width: 135px; }
.h { width: 139px; }
.i { width: 133px; }
.j { width: 136px; }
.grid tr { height: 20px; }
.grid th, .grid td { padding: 0; text-align: center; border-right: 1px solid #d0d7e5; border-bottom: 1px solid #d0d7e5; }
.grid th { font-weight: normal; color: #27413e; font-size: 12px; line-height: 16px; }
.grid thead tr { height: 21px; }
.grid thead th { padding-top: 2px; border-top: 1px solid #6b8cb8; border-right-color: #9eb6ce; border-bottom-color: #9eb6ce; background: linear-gradient(#f9fcfd, #d3dbe9); }
.grid thead .corner { background: #a9c4e9; box-shadow: inset 1px 1px 0 #d5e4f5; text-align: right; line-height: 0; padding: 2px 3px 0 0; }
.grid thead .sel { background: linear-gradient(#f9d99f, #f1c15f); border-right-color: #f29536; border-bottom-color: #f29536; }
.grid tbody th { vertical-align: bottom; background: #e4ecf7; border-right-color: #9eb6ce; border-bottom-color: #9eb6ce; }
.grid tbody .sel { background: #ffd58d; border-bottom-color: #f29536; border-right-color: #f29536; }
.grid .blank { border: 0; }
.grid .desc { height: 102px; }
.grid .desc td { color: #1f497d; font-family: "Noto Sans", sans-serif; line-height: 16px; white-space: nowrap; }
.grid .names { height: 34px; }
.grid .names td { padding-top: 1px; vertical-align: top; color: #000; font-weight: bold; line-height: 16px; white-space: nowrap; }
.cursor { position: relative; }
.cursor::before { content: ""; position: absolute; inset: -2px -2px -2px -1px; border: 3px solid #111; border-left-width: 2px; }
.cursor i { position: absolute; right: -3px; bottom: -3px; width: 6px; height: 6px; background: #111; border: 1px solid #fff; border-width: 1px 0 0 1px; }

/* floating objects on the sheet */
.logo { position: absolute; left: 42px; top: 34px; display: flex; background: #f6f6f6; }
.demand { width: 64px; height: 64px; padding: 7px 6px; background: #008fc5; color: #fff; font: 600 8px/10px "Open Sans", sans-serif; }
.note { position: absolute; color: #1f497d; font: italic 12px/15px "DejaVu Sans", sans-serif; white-space: nowrap; }
.heading { left: 585px; top: 33px; font-weight: bold; font-size: 13px; line-height: 17px; }
.heading .first { padding-left: 17px; }
.send { left: 444px; top: 96px; }
.intro { left: 47px; top: 141px; }

/* sheet tabs */
.sheetbar { display: flex; flex: none; height: 17px; background: linear-gradient(#7c9bc8, #a3bde2); border-top: 1px solid #7d9cc5; border-bottom: 1px solid #6b8cb8; overflow: hidden; }
.nav { display: flex; justify-content: space-between; width: 63px; padding: 0 6px; background: #c3d8f5; border-right: 1px solid #7d9cc5; fill: #15428b; }
.stab { width: 46px; padding-top: 2px; justify-content: flex-start; font: 12px/13px "DejaVu Sans Condensed", "DejaVu Sans", sans-serif; background: linear-gradient(#dbe8fa, #b4cef1); }
.stab-on { width: 57px; padding-left: 8px; font-weight: bold; background: #fff; }
.stab-new { width: 20px; padding: 0; }
.slant { height: 16px; }
.fillbar { flex: 1; }
.hscroll { display: flex; width: 502px; background: #7b9ac4; fill: #2d4466; }
.hscroll button { width: 16px; }
.grip { width: 6px; background: #f3f8ff; border: 1px solid #6b8cb8; }
.track { flex: 1; }
.thumb { display: flex; align-items: center; justify-content: center; width: 63%; height: 14px; border: 1px solid #5c7394; border-radius: 1px; background: linear-gradient(#eff3f8, #d3dde9 45%, #b4c3d6 50%, #ccd9e8); }
.thumb i { width: 8px; height: 7px; background: repeating-linear-gradient(90deg, #56657c 0 1px, transparent 1px 2px); }

/* status bar */
.status { display: flex; flex: none; justify-content: space-between; height: 14px; overflow: hidden; background: linear-gradient(#cfe2fb, #a9c9f3); }
.ready { height: 22px; padding: 2px 7px; border-right: 1px solid #7d9cc5; line-height: 18px; color: #15224a; }
.tools { display: flex; align-items: flex-start; height: 22px; width: 226px; padding: 1px 0 0 4px; border-left: 2px solid #6b8cb8; background: linear-gradient(#a9c9f7, #6f9fe3); color: #15224a; }
.views { display: flex; border: 1px solid #5f80b0; }
.views button { width: 18px; height: 19px; }
.pctbtn { width: 44px; height: 18px; }
.tools > button { flex: none; margin-top: 1px; }
.zoom { flex: none; width: 101px; height: 20px; appearance: none; background: linear-gradient(#4d668f, #4d668f) 0 9px / 100% 1px no-repeat; }
.zoom::-webkit-slider-thumb { appearance: none; width: 9px; height: 14px; border: 1px solid #4d668f; border-radius: 1px 1px 4px 4px; background: #e6effb; }
```
